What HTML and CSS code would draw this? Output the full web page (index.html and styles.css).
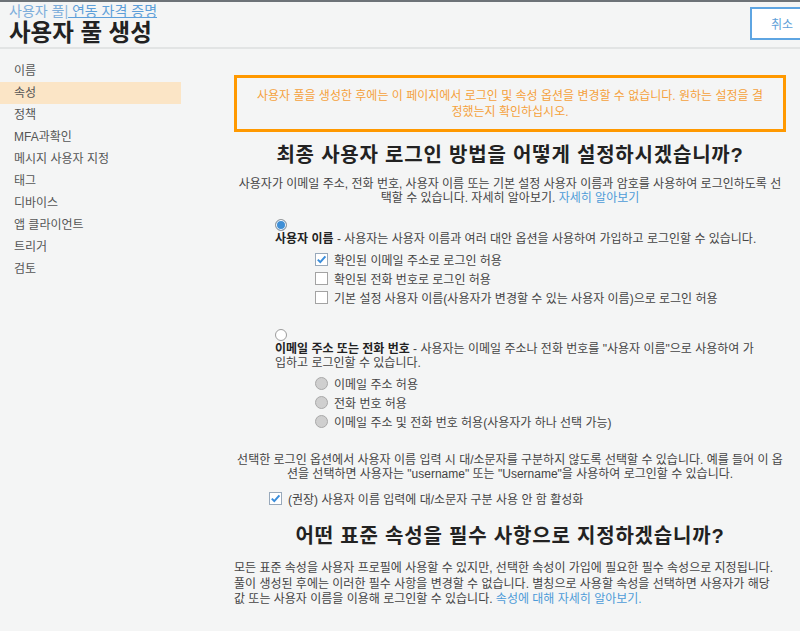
FILE: index.html
```html
<!DOCTYPE html>
<html lang="ko">
  <head>
    <meta charset="UTF-8" />
    <meta name="viewport" content="width=device-width, initial-scale=1.0" />
    <title>사용자 풀 생성</title>
    <link rel="stylesheet" href="styles.css">
  </head>
  <body>
    <header class="topbar">
      <div class="heading">
        <div class="crumbs"><a class="crumb">사용자 풀</a>|<a class="crumb linked"> 연동 자격 증명</a></div>
        <h1>사용자 풀 생성</h1>
      </div>
      <button class="cancel">취소</button>
    </header>
    <div class="layout">
      <ul class="steps">
        <li>이름</li>
        <li class="current">속성</li>
        <li>정책</li>
        <li>MFA과확인</li>
        <li>메시지 사용자 지정</li>
        <li>태그</li>
        <li>디바이스</li>
        <li>앱 클라이언트</li>
        <li>트리거</li>
        <li>검토</li>
      </ul>
      <main class="main">
        <div class="notice">사용자 풀을 생성한 후에는 이 페이지에서 로그인 및 속성 옵션을 변경할 수 없습니다. 원하는 설정을 결정했는지 확인하십시오.</div>

        <h2>최종 사용자 로그인 방법을 어떻게 설정하시겠습니까?</h2>
        <p class="intro">사용자가 이메일 주소, 전화 번호, 사용자 이름 또는 기본 설정 사용자 이름과 암호를 사용하여 로그인하도록 선택할 수 있습니다. 자세히 알아보기. <a class="link">자세히 알아보기</a></p>

        <div class="choice first">
          <span class="radio on"></span>
          <div class="choice-text"><b>사용자 이름</b> - 사용자는 사용자 이름과 여러 대안 옵션을 사용하여 가입하고 로그인할 수 있습니다.</div>
          <ul class="sub">
            <li><span class="box on"><svg width="11" height="11" viewBox="0 0 11 11"><path d="M1.8 5.6 L4.3 8.1 L9.4 2.4" fill="none" stroke="#3a8ddb" stroke-width="2"/></svg></span>확인된 이메일 주소로 로그인 허용</li>
            <li><span class="box"></span>확인된 전화 번호로 로그인 허용</li>
            <li><span class="box"></span>기본 설정 사용자 이름(사용자가 변경할 수 있는 사용자 이름)으로 로그인 허용</li>
          </ul>
        </div>

        <div class="choice">
          <span class="radio"></span>
          <div class="choice-text"><b>이메일 주소 또는 전화 번호</b> - 사용자는 이메일 주소나 전화 번호를 "사용자 이름"으로 사용하여 가입하고 로그인할 수 있습니다.</div>
          <ul class="sub">
            <li><span class="radio off"></span>이메일 주소 허용</li>
            <li><span class="radio off"></span>전화 번호 허용</li>
            <li><span class="radio off"></span>이메일 주소 및 전화 번호 허용(사용자가 하나 선택 가능)</li>
          </ul>
        </div>

        <p class="intro case">선택한 로그인 옵션에서 사용자 이름 입력 시 대/소문자를 구분하지 않도록 선택할 수 있습니다. 예를 들어 이 옵션을 선택하면 사용자는 "username" 또는 "Username"을 사용하여 로그인할 수 있습니다.</p>
        <div class="case-check"><span class="box on"><svg width="11" height="11" viewBox="0 0 11 11"><path d="M1.8 5.6 L4.3 8.1 L9.4 2.4" fill="none" stroke="#3a8ddb" stroke-width="2"/></svg></span>(권장) 사용자 이름 입력에 대/소문자 구분 사용 안 함 활성화</div>

        <h2 class="second">어떤 표준 속성을 필수 사항으로 지정하겠습니까?</h2>
        <p class="attrs">모든 표준 속성을 사용자 프로필에 사용할 수 있지만, 선택한 속성이 가입에 필요한 필수 속성으로 지정됩니다. 풀이 생성된 후에는 이러한 필수 사항을 변경할 수 없습니다. 별칭으로 사용할 속성을 선택하면 사용자가 해당 값 또는 사용자 이름을 이용해 로그인할 수 있습니다. <a class="link">속성에 대해 자세히 알아보기.</a></p>
      </main>
    </div>
  </body>
</html>
```

FILE: styles.css
```css
body {
  margin: 0;
  font-family: "Liberation Sans", "Noto Sans CJK KR", sans-serif;
  font-size: 12px;
  color: #444;
  background: #f4f5f5;
  overflow: hidden;
}
ul {
  list-style: none;
  margin: 0;
  padding: 0;
}
.topbar {
  display: flex;
  justify-content: space-between;
  align-items: flex-start;
  height: 45px;
  border-top: 2px solid #6d7378;
  border-bottom: 2px solid #e2e4e4;
  padding-left: 9px;
}
.heading {
  padding-top: 1px;
}
.crumbs {
  font-size: 14px;
  line-height: 16px;
  color: #8db6dc;
}
.crumb {
  color: #7eaedb;
}
.crumb.linked {
  color: #5d9fd9;
  text-decoration: underline;
}
h1 {
  margin: 0;
  font-size: 23.5px;
  line-height: 28px;
  font-weight: bold;
  color: #222;
}
.cancel {
  margin-top: 5px;
  margin-right: -14px;
  width: 64px;
  height: 33px;
  border: 2px solid #5ea5e2;
  background: #fff;
  color: #5e9fd8;
  font-family: inherit;
  font-size: 12px;
  padding: 0;
}
.layout {
  display: flex;
}
.steps {
  width: 181px;
  flex-shrink: 0;
  padding-top: 11px;
}
.steps li {
  height: 22px;
  line-height: 22px;
  padding-left: 14px;
  color: #555;
}
.steps li.current {
  background: #fbe5c6;
}
.main {
  flex: 1;
  padding: 26px 14px 0 53px;
}
.notice {
  border: 3px solid #ff9900;
  padding: 10px 20px 9px;
  line-height: 16px;
  text-align: center;
  color: #f5a13c;
}
h2 {
  margin: 11px 0 0;
  font-size: 20px;
  letter-spacing: 0.8px;
  line-height: 24px;
  text-align: center;
  color: #222;
}
h2.second {
  margin-top: 16px;
}
.intro {
  margin: 10px 0 0;
  line-height: 14px;
  text-align: center;
}
.link {
  color: #4d9bd8;
}
.choice {
  margin: 22px 26px 0 41px;
}
.choice.first {
  margin-top: 14px;
}
.choice-text {
  margin-top: 1px;
  line-height: 14px;
}
.choice-text b {
  color: #222;
}
.radio {
  display: block;
  width: 10px;
  height: 10px;
  border: 1px solid #9c9c9c;
  border-radius: 50%;
  background: #fff;
}
.radio.on {
  background: #3f8fd6;
  box-shadow: inset 0 0 0 1px #fff;
}
.sub {
  margin: 4px 0 0 40px;
}
.sub li,
.case-check {
  display: flex;
  align-items: center;
  height: 19px;
}
.sub .radio.off {
  width: 11px;
  height: 11px;
  margin-right: 6px;
  background: #cfcfcf;
  border-color: #a9a9a9;
}
.box {
  display: flex;
  align-items: center;
  justify-content: center;
  width: 11px;
  height: 11px;
  margin-right: 6px;
  border: 1px solid #a3a3a3;
  background: #fff;
}
.box.on {
  border-color: #98a9bb;
}
.case {
  margin-top: 22px;
}
.case-check {
  margin: 8px 0 0 35px;
}
.attrs {
  margin: 13px 6px 0 0;
  line-height: 15.5px;
}
```
